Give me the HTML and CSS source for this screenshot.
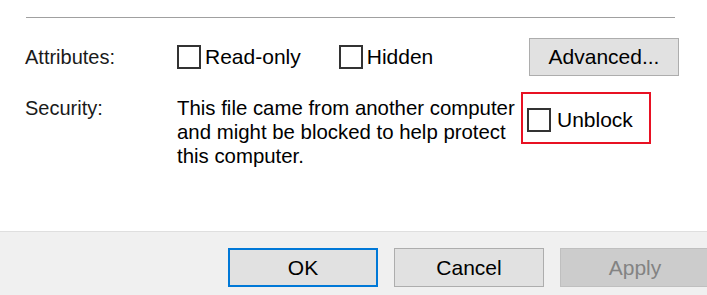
FILE: index.html
```html
<!DOCTYPE html>
<html lang="en">

<head>
    <meta charset="UTF-8" />
    <title>File Properties</title>
    <link rel="stylesheet" href="styles.css">
</head>

<body>
    <div class="dialog">
        <div class="dialog-body">
            <div class="separator"></div>

            <!-- Attributes row -->
            <div class="row row-attributes">
                <span class="label">Attributes:</span>
                <div class="checks">
                    <label class="check"><span class="box"></span>Read-only</label>
                    <label class="check"><span class="box"></span>Hidden</label>
                </div>
                <button class="btn btn-advanced">Advanced...</button>
            </div>

            <!-- Security row -->
            <div class="row row-security">
                <span class="label label-security">Security:</span>
                <p class="security-text">This file came from another computer and might be blocked to help protect this computer.</p>
                <div class="unblock">
                    <label class="check"><span class="box"></span>Unblock</label>
                </div>
            </div>
        </div>

        <div class="dialog-footer">
            <button class="btn btn-default">OK</button>
            <button class="btn">Cancel</button>
            <button class="btn btn-disabled">Apply</button>
        </div>
    </div>
</body>

</html>
```

FILE: styles.css
```css
body,
button {
    font-family: 'Liberation Sans', Arial, sans-serif;
    font-size: 21px;
    color: #000;
}

body {
    margin: 0;
    background: #fff;
    overflow: hidden;
}

.dialog {
    width: 707px;
    height: 295px;
    display: flex;
    flex-direction: column;
    overflow: hidden;
}

.dialog-body {
    height: 231px;
    padding: 17px 28px 0 25px;
    box-sizing: border-box;
}

.separator {
    height: 1px;
    background: #a0a0a0;
    margin: 0 4px 0 1px;
}

.row {
    display: grid;
    grid-template-columns: 152px 1fr auto;
}

.row-attributes {
    margin-top: 20px;
    height: 38px;
    align-items: center;
}

.label {
    font-size: 20px;
    color: #1a1a1a;
}

.checks {
    display: flex;
    gap: 38px;
}

.check {
    display: flex;
    align-items: center;
    gap: 4px;
    line-height: 24px;
}

.box {
    width: 20px;
    height: 20px;
    border: 2px solid #333;
    background: #fff;
    flex-shrink: 0;
}

.btn {
    width: 150px;
    height: 38px;
    padding: 0;
    background: #e1e1e1;
    border: 1px solid #adadad;
    cursor: pointer;
}

.row-security {
    grid-template-columns: 152px 344px auto;
    align-items: start;
    margin-top: 16px;
}

.label-security {
    padding-top: 5px;
    line-height: 23px;
}

.security-text {
    margin: 0;
    padding-top: 4px;
    font-size: 20.4px;
    line-height: 24px;
}

.unblock {
    width: 130px;
    height: 52px;
    box-sizing: border-box;
    border: 2px solid #e81123;
    display: flex;
    align-items: center;
    padding: 3px 0 0 4px;
}

.unblock .check {
    gap: 6px;
}

.dialog-footer {
    flex: 1;
    background: #f0f0f0;
    border-top: 1px solid #dfdfdf;
    display: flex;
    gap: 16px;
    padding: 16px 0 0 228px;
}

.dialog-footer .btn {
    height: 39px;
    flex-shrink: 0;
}

.btn-default {
    border: 2px solid #0078d7;
}

.btn-disabled {
    background: #cccccc;
    border-color: #bfbfbf;
    color: #838383;
}
```
